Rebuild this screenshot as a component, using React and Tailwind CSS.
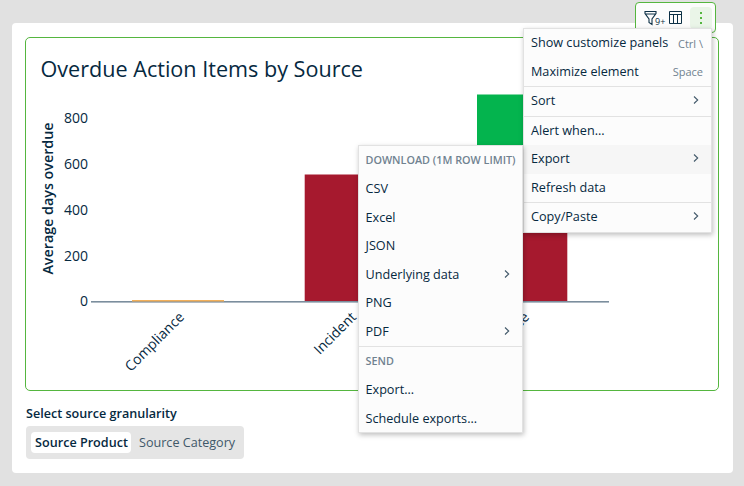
import clsx from 'clsx'

const TICKS = [
    { value: 800, y: 118 },
    { value: 600, y: 164 },
    { value: 400, y: 210 },
    { value: 200, y: 256 },
    { value: 0, y: 301 },
]

const CATEGORIES = [
    { label: 'Compliance', x: 185 },
    { label: 'Incident', x: 357 },
    { label: 'Maintenance', x: 530 },
]

function Chevron() {
    return (
        <svg className="h-2.5 w-2 shrink-0" viewBox="0 0 8 10" fill="none" stroke="#415869" strokeWidth="1.1">
            <path d="M2 1.5 L5.7 5 L2 8.5" />
        </svg>
    )
}

function MenuItem({ label, shortcut, submenu, active }) {
    return (
        <div className={clsx('flex h-[28.5px] items-center justify-between pb-[1.6px] pl-[7px]', submenu ? 'pr-[11px]' : 'pr-2', active && 'bg-[#f6f6f6]')}>
            <span>{label}</span>
            {shortcut && <span className="pt-[3px] text-[11px] text-[#708290]">{shortcut}</span>}
            {submenu && <Chevron />}
        </div>
    )
}

function MenuHeading({ children }) {
    return (
        <div className="flex h-[28.9px] items-center pl-[7px] text-[10.8px] font-semibold whitespace-nowrap text-[#708290]">
            {children}
        </div>
    )
}

function Divider() {
    return <div className="h-px bg-[#e2e2e2]"></div>
}

function OverdueChart() {
    return (
        <svg className="block h-[352px] w-[692px]" viewBox="26 38 692 352" fill="#06293f">
            <rect x="304.7" y="174.5" width="92" height="127" fill="#a6192e" />
            <rect x="477" y="94.5" width="90.3" height="96" fill="#04b44e" />
            <rect x="477" y="190" width="90.3" height="111" fill="#a6192e" />
            <rect x="91" y="301" width="518" height="1.6" fill="#7b8e9d" />
            <rect x="132" y="300" width="92" height="1.5" fill="#f3b05a" />
            <text transform="translate(53 198.5) rotate(-90)" textAnchor="middle" fontSize="14.3" fontWeight="600">
                Average days overdue
            </text>
            {TICKS.map((tick) => (
                <text key={tick.value} x="88" y={tick.y + 5} textAnchor="end" fontSize="14">
                    {tick.value}
                </text>
            ))}
            {CATEGORIES.map((category) => (
                <text key={category.label} transform={`translate(${category.x} 318) rotate(-45)`} textAnchor="end" fontSize="14">
                    {category.label}
                </text>
            ))}
            <text x="40.5" y="77" fontSize="21.6">Overdue Action Items by Source</text>
        </svg>
    )
}

function Toolbar() {
    return (
        <div className="absolute top-0.5 left-[635px] flex h-[31px] w-[81px] items-center rounded border border-[#55b63f] bg-[#fcfcfc] pl-2 text-[#0d3046]">
            <svg className="h-4 w-[13px]" viewBox="0 0 13 16" fill="none" stroke="currentColor" strokeWidth="1.1">
                <path d="M1 1.5 H12 V3.5 L8 9 V14.5 L5 12.5 V9 L1 3.5 Z M1.5 4 H11.5" />
            </svg>
            <span className="mt-2 -ml-0.5 w-[14px] text-[9px] font-medium">9+</span>
            <svg className="h-[13px] w-[13px]" viewBox="0 0 13 13" fill="none" stroke="currentColor" strokeWidth="1">
                <path d="M0.5 0.5 H12.5 V12.5 H0.5 Z M0.5 3.5 H12.5 M4.5 3.5 V12.5 M8.5 3.5 V12.5" />
            </svg>
            <div className="ml-2 flex h-[22px] w-[22px] items-center justify-center rounded-sm bg-[#eaf5e8]">
                <svg className="h-[14px] w-1" viewBox="0 0 4 14" fill="#55b63f">
                    <path d="M1 1 h2 v2 h-2 z M1 6 h2 v2 h-2 z M1 11 h2 v2 h-2 z" />
                </svg>
            </div>
        </div>
    )
}

export default function App() {
    return (
        <div className="relative h-[486px] w-[744px] overflow-hidden bg-[#e1e1e1] pt-[23px] pl-3 font-['Open_Sans',sans-serif] text-[12.65px] leading-4 text-[#06293f]">
            <div className="h-[450px] w-[721px] rounded bg-white pt-3.5 pl-[13px]">
                <div className="h-[354px] w-[694px] rounded-[5px] border border-[#55b63f]">
                    <OverdueChart />
                </div>
                <div className="mt-[15px] ml-px text-[12.6px] font-semibold">Select source granularity</div>
                <div className="mt-1 ml-px flex h-[33px] w-[218px] items-center gap-2 rounded bg-[#e5e5e5] pl-[5px] whitespace-nowrap">
                    <div className="flex h-[21px] w-[100px] items-center justify-center rounded bg-white pl-px text-[12.6px] font-semibold">
                        Source Product
                    </div>
                    <div className="text-[12.6px] text-[#415869]">Source Category</div>
                </div>
            </div>

            <Toolbar />

            {/* Element menu */}
            <div className="absolute top-[28px] left-[523px] h-[205px] w-[189px] border border-[#e2e2e2] bg-[#fcfcfc] shadow-[1px_2px_5px_rgba(0,0,0,0.25)]">
                <MenuItem label="Show customize panels" shortcut="Ctrl \" />
                <MenuItem label="Maximize element" shortcut="Space" />
                <Divider />
                <MenuItem label="Sort" submenu />
                <Divider />
                <MenuItem label="Alert when..." />
                <MenuItem label="Export" submenu active />
                <MenuItem label="Refresh data" />
                <Divider />
                <MenuItem label="Copy/Paste" submenu />
            </div>

            {/* Export submenu */}
            <div className="absolute top-[145px] left-[357.5px] h-[288px] w-[165.5px] border border-[#e2e2e2] bg-[#fcfcfc] shadow-[1px_2px_5px_rgba(0,0,0,0.25)]">
                <MenuHeading>DOWNLOAD (1M ROW LIMIT)</MenuHeading>
                <MenuItem label="CSV" />
                <MenuItem label="Excel" />
                <MenuItem label="JSON" />
                <MenuItem label="Underlying data" submenu />
                <MenuItem label="PNG" />
                <MenuItem label="PDF" submenu />
                <Divider />
                <MenuHeading>SEND</MenuHeading>
                <MenuItem label="Export..." />
                <MenuItem label="Schedule exports..." />
            </div>
        </div>
    )
}
